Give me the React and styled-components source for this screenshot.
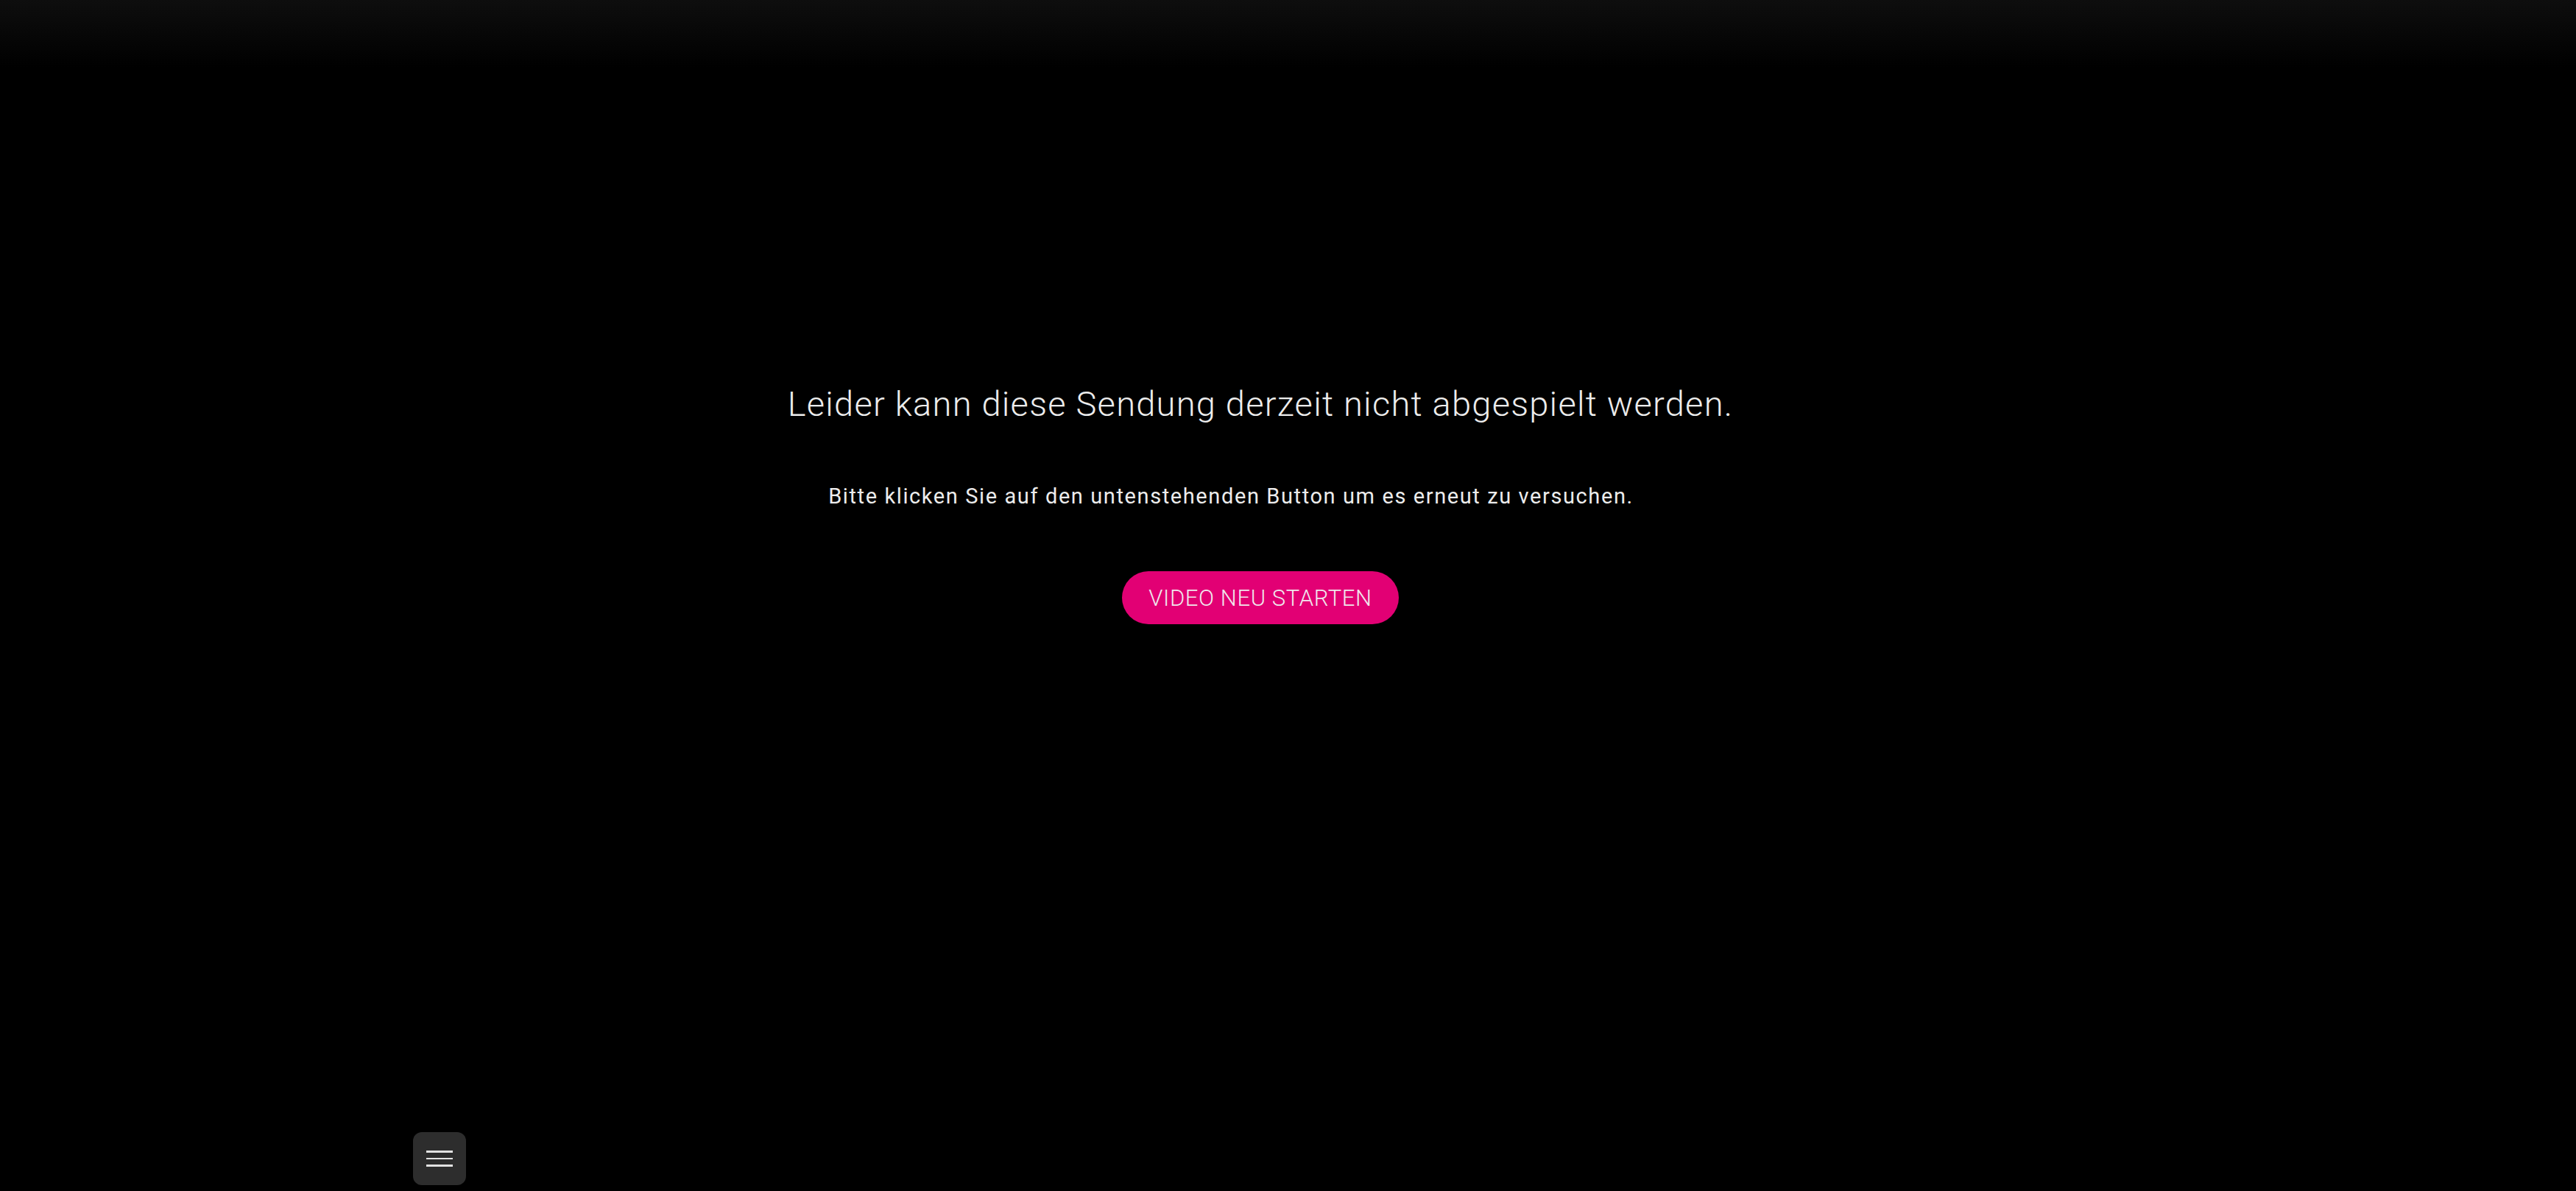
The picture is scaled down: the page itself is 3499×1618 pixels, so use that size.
import React from 'react';
import styled, { createGlobalStyle } from 'styled-components';

const GlobalStyle = createGlobalStyle`
  html, body {
    margin: 0;
    padding: 0;
    background: #000;
  }
  body {
    font-family: Roboto, "Liberation Sans", sans-serif;
    color: #ededed;
  }
`;

const Page = styled.div`
  position: relative;
  height: 100vh;
  display: flex;
  flex-direction: column;
  background: #000;
  overflow: hidden;
`;

const TopShade = styled.div`
  position: absolute;
  top: 0;
  left: 0;
  right: 0;
  height: 92px;
  background: linear-gradient(to bottom, #0e0e0e, rgba(0, 0, 0, 0));
  pointer-events: none;
`;

const Message = styled.main`
  flex: 1;
  display: flex;
  flex-direction: column;
  align-items: center;
  padding-top: 521px;
  padding-right: 75px;
`;

const Title = styled.h1`
  margin: 0;
  font-size: 47px;
  line-height: 56px;
  font-weight: 300;
  letter-spacing: 1.25px;
  color: #ececec;
`;

const Hint = styled.p`
  margin: 80px 80px 0 0;
  font-size: 29px;
  line-height: 34px;
  font-weight: 400;
  letter-spacing: 1.6px;
  color: #ececec;
`;

const RestartButton = styled.button`
  margin-top: 85px;
  height: 72px;
  padding: 0 36px;
  border: none;
  border-radius: 36px;
  background: #e20074;
  color: #f0e6ec;
  font-family: inherit;
  font-size: 31px;
  font-weight: 300;
  letter-spacing: 0.6px;
  cursor: pointer;
`;

const Footer = styled.footer`
  display: flex;
  padding: 0 0 8px 561px;
`;

const MenuButton = styled.button`
  width: 72px;
  height: 72px;
  border: none;
  border-radius: 12px;
  background: #2d2d2d;
  display: flex;
  flex-direction: column;
  align-items: center;
  justify-content: center;
  gap: 7px;
  padding: 0;
  cursor: pointer;
`;

const Bar = styled.span`
  display: block;
  width: 36px;
  height: 2.5px;
  background: #e2e2e2;
`;

export default function App() {
  return (
    <>
      <GlobalStyle />
      <Page>
        <TopShade />
        <Message>
          <Title>Leider kann diese Sendung derzeit nicht abgespielt werden.</Title>
          <Hint>Bitte klicken Sie auf den untenstehenden Button um es erneut zu versuchen.</Hint>
          <RestartButton>VIDEO NEU STARTEN</RestartButton>
        </Message>
        <Footer>
          <MenuButton aria-label="Menü">
            <Bar />
            <Bar />
            <Bar />
          </MenuButton>
        </Footer>
      </Page>
    </>
  );
}
